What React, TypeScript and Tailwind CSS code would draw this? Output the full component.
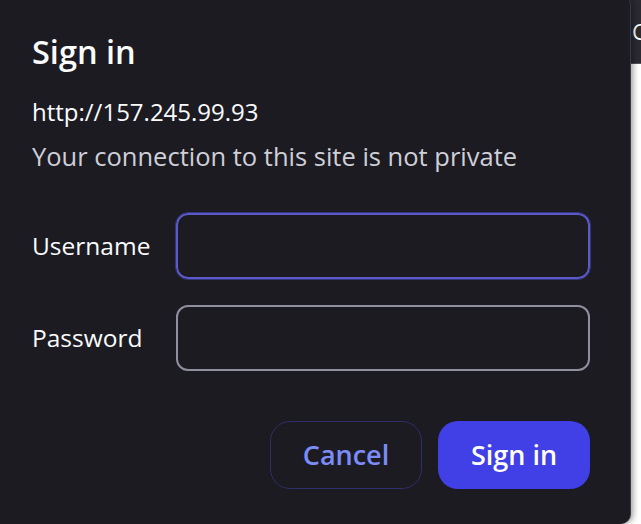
import React from "react";

const font = { fontFamily: "'Open Sans', Lato, sans-serif" };

export default function App() {
  return (
    <div
      className="relative w-[641px] h-[524px] overflow-hidden bg-white"
      style={font}
    >
      {/* browser content behind the dialog */}
      <div className="flex h-[64px] items-center border-b border-[#52525e] bg-[#2b2a33] pl-[632px] text-[22px] text-white">
        C
      </div>

      {/* dialog */}
      <div className="absolute left-0 top-[-5px] h-[529px] w-[631px] rounded-r-[10px] border-r border-[#3a3944] bg-[#1c1b22] pl-8 pr-10 pt-[37px] shadow-[2px_0_6px_rgba(0,0,0,0.4)]">
        <h1 className="text-[32.5px] font-semibold leading-[40px] text-[#fbfbfe]">
          Sign in
        </h1>
        <p className="mt-6 text-[24px] leading-[32px] text-[#fbfbfe]">
          http://157.245.99.93
        </p>
        <p className="mt-3 text-[25.5px] leading-[32px] text-[#cfcfd8]">
          Your connection to this site is not private
        </p>

        <div className="mt-[41px] grid grid-cols-[144px_414px] items-center gap-y-[26px]">
          <label className="text-[24.5px] text-[#fbfbfe]">Username</label>
          <input
            type="text"
            className="h-[66px] rounded-[12px] border-2 border-[#5b5bc8] bg-transparent px-3 text-[23px] text-white outline outline-1 outline-[#34347a] focus:outline-none"
          />
          <label className="text-[24.5px] text-[#fbfbfe]">Password</label>
          <input
            type="password"
            className="h-[66px] rounded-[12px] border-2 border-[#8f8f9d] bg-transparent px-3 text-[23px] text-white outline-none"
          />
        </div>

        <div className="mt-[50px] flex justify-end gap-4">
          <button className="h-[68px] w-[152px] rounded-[20px] border border-[#2e2e6a] text-[27px] font-semibold text-[#7c8cf6]">
            Cancel
          </button>
          <button className="h-[68px] w-[152px] rounded-[20px] bg-[#4040e6] text-[27px] font-semibold text-white">
            Sign in
          </button>
        </div>
      </div>
    </div>
  );
}
